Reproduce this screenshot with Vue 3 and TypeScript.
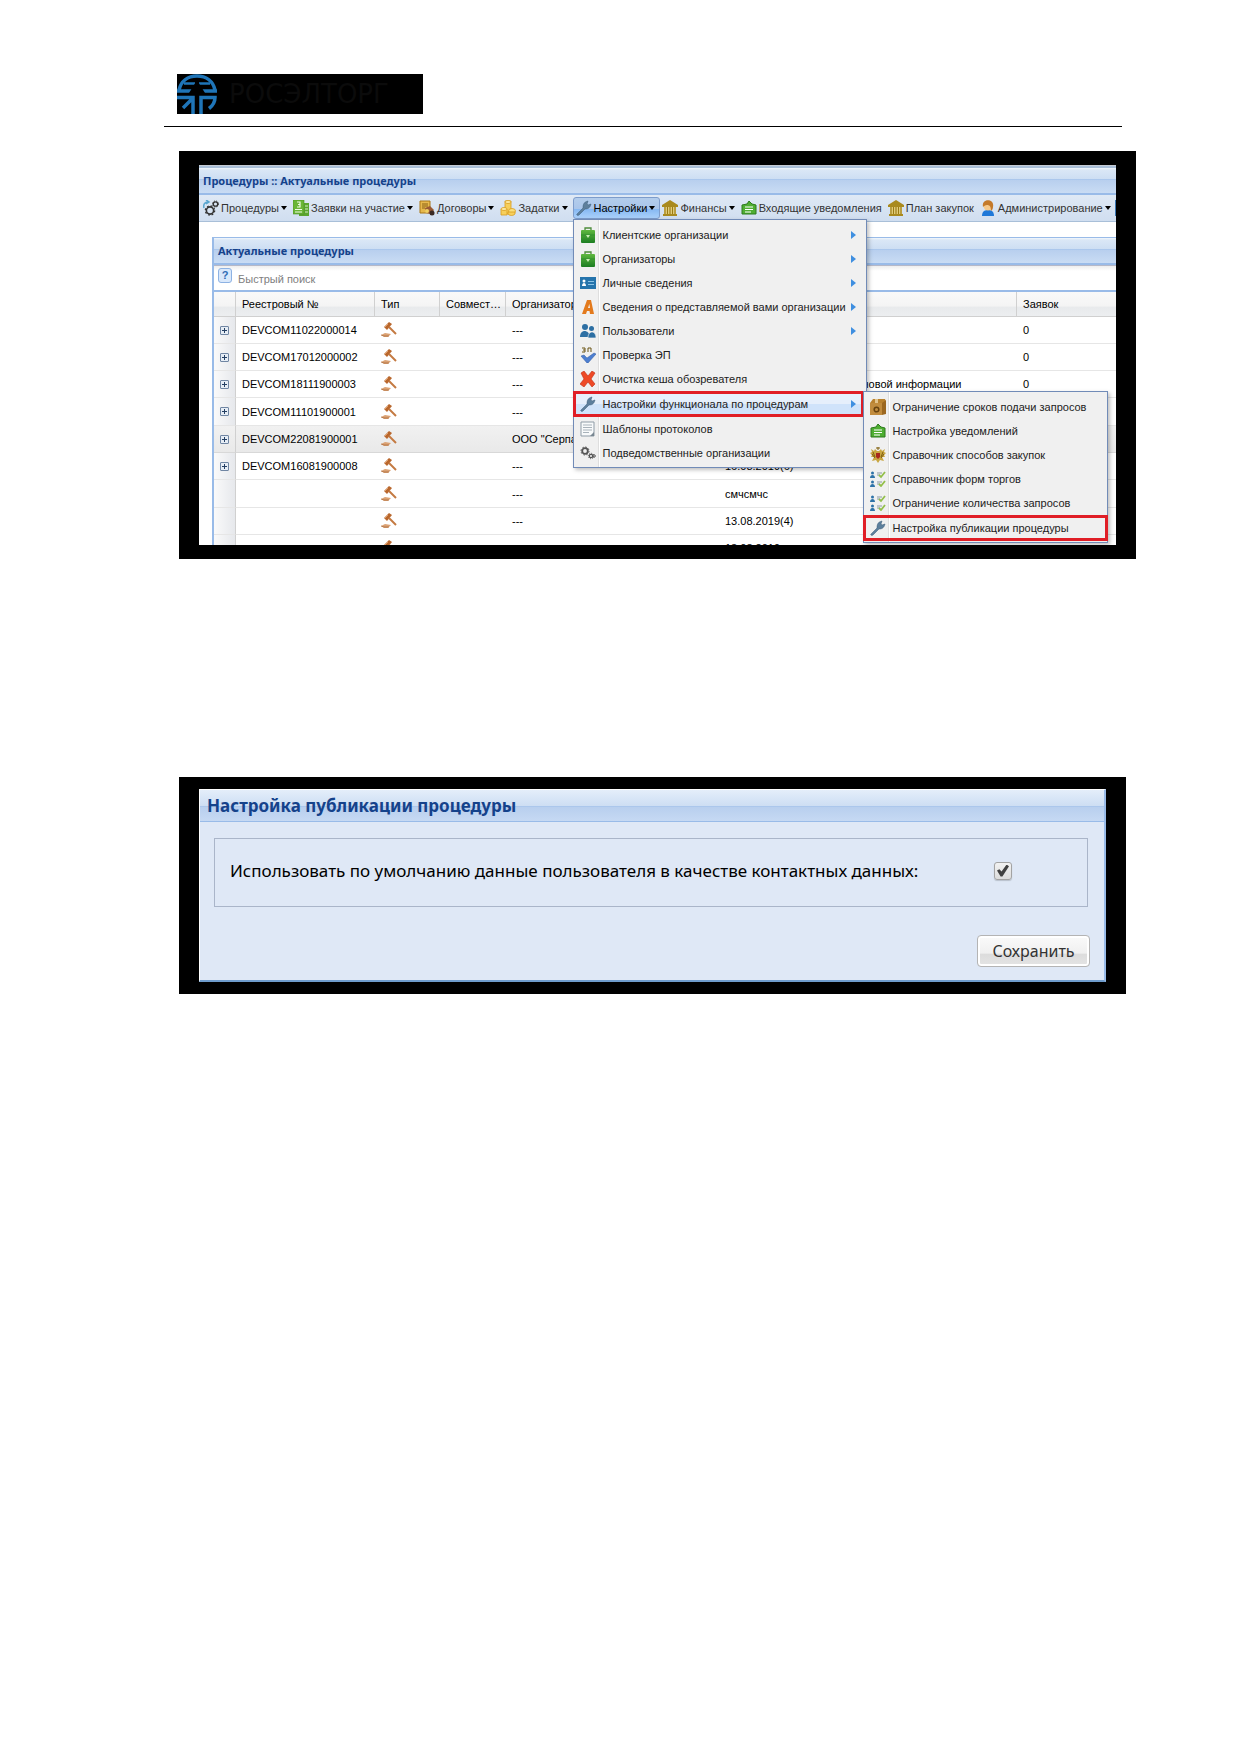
<script setup lang="ts">
import { ref } from 'vue'

interface MenuItem { icon: string; label: string; arrow?: boolean; marked?: boolean }
interface ToolItem { icon: string; label: string; arrow: boolean; active?: boolean }
interface Row { num: string; org: string; name: string; count: string; over?: boolean }

const tools: ToolItem[] = [
  { icon: 'gears', label: 'Процедуры', arrow: true },
  { icon: 'sheets', label: 'Заявки на участие', arrow: true },
  { icon: 'contract', label: 'Договоры', arrow: true },
  { icon: 'coins', label: 'Задатки', arrow: true },
  { icon: 'wrench', label: 'Настройки', arrow: true, active: true },
  { icon: 'bank', label: 'Финансы', arrow: true },
  { icon: 'mail', label: 'Входящие уведомления', arrow: false },
  { icon: 'bank', label: 'План закупок', arrow: false },
  { icon: 'person', label: 'Администрирование', arrow: true },
]

const menu: MenuItem[] = [
  { icon: 'case', label: 'Клиентские организации', arrow: true },
  { icon: 'case', label: 'Организаторы', arrow: true },
  { icon: 'card', label: 'Личные сведения', arrow: true },
  { icon: 'letter', label: 'Сведения о представляемой вами организации', arrow: true },
  { icon: 'users', label: 'Пользователи', arrow: true },
  { icon: 'sign', label: 'Проверка ЭП' },
  { icon: 'cross', label: 'Очистка кеша обозревателя' },
  { icon: 'wrench', label: 'Настройки функционала по процедурам', arrow: true, marked: true },
  { icon: 'doc', label: 'Шаблоны протоколов' },
  { icon: 'cogs', label: 'Подведомственные организации' },
]

const submenu: MenuItem[] = [
  { icon: 'box', label: 'Ограничение сроков подачи запросов' },
  { icon: 'mail', label: 'Настройка уведомлений' },
  { icon: 'eagle', label: 'Справочник способов закупок' },
  { icon: 'checks', label: 'Справочник форм торгов' },
  { icon: 'checks', label: 'Ограничение количества запросов' },
  { icon: 'wrench', label: 'Настройка публикации процедуры', marked: true },
]

const rows: Row[] = [
  { num: 'DEVCOM11022000014', org: '---', name: '', count: '0' },
  { num: 'DEVCOM17012000002', org: '---', name: '', count: '0' },
  { num: 'DEVCOM18111900003', org: '---', name: 'Уведомление о запросе ценовой информации', count: '0' },
  { num: 'DEVCOM11101900001', org: '---', name: '', count: '0' },
  { num: 'DEVCOM22081900001', org: 'ООО "Серпантин"', name: '', count: '0', over: true },
  { num: 'DEVCOM16081900008', org: '---', name: '16.08.2019(6)', count: '' },
  { num: '', org: '---', name: 'смчсмчс', count: '' },
  { num: '', org: '---', name: '13.08.2019(4)', count: '' },
  { num: '', org: '', name: '13.08.2019', count: '' },
]

const useDefaults = ref(true)
const search = ref('')
</script>

<template>
  <svg class="defs" aria-hidden="true">
    <defs>
      <linearGradient id="gGreen" x1="0" y1="0" x2="0" y2="1"><stop offset="0" stop-color="#5fb83f" /><stop offset="1" stop-color="#1c7d22" /></linearGradient>
      <symbol id="gears" viewBox="0 0 16 16">
        <path d="M1 8C0 4 2 2 5 2M3 0l3 2-3 2" fill="none" stroke="#5aa6cf" stroke-width="1.500" />
        <circle cx="7" cy="10.500" r="3.600" fill="none" stroke="#333" stroke-width="1.600" />
        <circle cx="7" cy="10.500" r="4.700" fill="none" stroke="#333" stroke-width="1.200" stroke-dasharray="1.800 1.900" />
        <circle cx="12.500" cy="4" r="2.200" fill="none" stroke="#333" stroke-width="1.300" />
        <circle cx="12.500" cy="4" r="3" fill="none" stroke="#333" stroke-dasharray="1.200 1.200" />
      </symbol>
      <symbol id="sheets" viewBox="0 0 16 16">
        <rect x="6" y="3" width="10" height="13" fill="#5ba52f" />
        <path d="M12 6h3M12 9h3M12 12h3" stroke="#d5efc4" />
        <rect x="0" y="0" width="11" height="14" fill="#6ab536" stroke="#4a8f24" stroke-width=".6" />
        <path d="M4 2h3v2.500H5 7V7H4M2 9.500h7M2 12h7" fill="none" stroke="#eefae4" stroke-width="1.200" />
      </symbol>
      <symbol id="contract" viewBox="0 0 16 16">
        <path d="M1 1h10v12H1z" fill="#e6b84c" stroke="#a97716" />
        <path d="M3 4h6M3 6h6M3 8h3" stroke="#8a6114" />
        <path d="M6 8l5-2 4 4-3 4-5-1z" fill="#9a5a34" /><circle cx="8" cy="11" r="2" fill="#f0d060" /><circle cx="13" cy="13" r="2.500" fill="#3a2a24" />
      </symbol>
      <symbol id="coins" viewBox="0 0 16 16">
        <g fill="#f6cf5c" stroke="#d99c1c" stroke-width=".8"><path d="M5 1h6v13H5z" /><ellipse cx="8" cy="2" rx="3" ry="1.500" fill="#fdeba4" /><path d="M1 9h6v6H1z" /><ellipse cx="4" cy="9" rx="3" ry="1.500" fill="#fdeba4" /><ellipse cx="12" cy="11" rx="3.500" ry="2.500" fill="#fbe07c" /><path d="M8 12h7v2c-2 2-5 2-7 0z" /></g>
      </symbol>
      <symbol id="wrench" viewBox="0 0 16 16">
        <path d="M1 14l6-6C7 4 8 2 12 1l-1 3 1 1 3-1c-1 4-3 5-6 5l-6 6c-1 1-3 0-2-1z" fill="#5d7f9c" stroke="#3b5a78" stroke-width=".5" />
      </symbol>
      <symbol id="bank" viewBox="0 0 16 16">
        <path d="M8 0l8 5v2H0V5zM1 14h14v2H1z" fill="#a98a1e" /><path d="M2 7h12v7H2z" fill="#e8d584" />
        <path d="M3 7v7M5.500 7v7M8 7v7M10.500 7v7M13 7v7" stroke="#9b7b14" stroke-width="1.200" />
      </symbol>
      <symbol id="mail" viewBox="0 0 16 16">
        <path d="M1 5l5-1 2-3 3 3 4 1v9H1z" fill="#4fae32" stroke="#2c7a1c" /><path d="M4 7h8M4 9.500h8M4 12h6" stroke="#fff" stroke-width="1.200" />
      </symbol>
      <symbol id="person" viewBox="0 0 16 16">
        <path d="M2 16c0-4 2-6 6-6s6 2 6 6z" fill="#1f78d8" /><circle cx="8" cy="6" r="4.500" fill="#f6c98a" /><path d="M3 7c-2-9 12-9 10 0 0 2-1 3-2 4 0-4-1-6-4-6-2 0-3 1-4 2z" fill="#c47a2a" />
      </symbol>
      <symbol id="case" viewBox="0 0 16 16">
        <path d="M5 3V1h6v2" fill="none" stroke="#4d8c3a" stroke-width="1.300" /><rect x="1" y="3" width="14" height="13" rx="1" fill="url(#gGreen)" /><path d="M1 8h14" stroke="#2a8a2c" stroke-width=".7" /><path d="M6 8h4l-2 3z" fill="#c9edb4" />
      </symbol>
      <symbol id="card" viewBox="0 0 16 16">
        <rect x="0" y="2" width="16" height="12" fill="#2574ac" /><circle cx="4" cy="6" r="1.500" fill="#fff" /><path d="M2 11c0-4 4-4 4 0z" fill="#fff" /><path d="M8 6h6v1H8zM8 9h6v1H8z" fill="#8cc4e6" />
      </symbol>
      <symbol id="letter" viewBox="0 0 16 16">
        <path d="M2 15L7 1h4l3 14h-4l-.5-3H7l-1 3zM8 9h2L9.300 5z" fill="#e37a1d" fill-rule="evenodd" />
      </symbol>
      <symbol id="users" viewBox="0 0 16 16">
        <g fill="#2d6fa3"><circle cx="5" cy="4" r="3" /><path d="M0 14c0-8 9-8 10 0z" /><circle cx="11.500" cy="5.500" r="2.500" /><path d="M8 15c0-8 8-8 8 0z" stroke="#f0f0f0" stroke-width=".7" /></g>
      </symbol>
      <symbol id="sign" viewBox="0 0 16 16">
        <path d="M2 1h3v4H2M3 3h2M8 5V1h3v4" fill="none" stroke="#6a5414" /><path d="M1 9l3-1 3 3 7-5 2 1-8 9H7z" fill="#4d7fd0" stroke="#2c56a0" stroke-width=".5" />
      </symbol>
      <symbol id="cross" viewBox="0 0 16 16">
        <path d="M1 2l3-2 4 5 4-5 3 2-4 6 4 5-3 3-4-5-4 5-4-3 4-5z" fill="#ee4a26" stroke="#c02c12" stroke-width=".6" />
      </symbol>
      <symbol id="doc" viewBox="0 0 16 16">
        <path d="M1 1h13v14H1z" fill="#f8fafb" stroke="#8e9ba6" /><path d="M3 4h9M3 6.500h9M3 9h9M3 11.500h6" stroke="#a8b2ba" /><path d="M10 15l4-4v4z" fill="#788691" />
      </symbol>
      <symbol id="cogs" viewBox="0 0 16 16">
        <g fill="none" stroke="#555"><circle cx="5" cy="6" r="2.800" stroke-width="1.800" /><circle cx="5" cy="6" r="4" stroke-dasharray="1.600 1.500" /><circle cx="11" cy="11" r="1.700" stroke-width="1.300" /><circle cx="11" cy="11" r="2.700" stroke-dasharray="1 1.100" /><circle cx="14" cy="11" r="1.300" /></g>
      </symbol>
      <symbol id="box" viewBox="0 0 16 16">
        <path d="M0 4l3-4h12l1 3v12H0z" fill="#b9822f" /><path d="M0 4h12l4-3v14l-4 1H0z" fill="#9c6821" /><path d="M0 4h12v12H0z" fill="#c18c3e" /><circle cx="6.500" cy="10.500" r="2.300" fill="none" stroke="#68430f" stroke-width="1.500" /><path d="M5 0h3v4H5z" fill="#e3c48c" />
      </symbol>
      <symbol id="eagle" viewBox="0 0 16 16">
        <path d="M7 4L5 2 4 4 1 2l1 3-2 1 2 2-1 2 3 0-2 4 4-1 2 3 2-3 4 1-2-4 3 0-1-2 2-2-2-1 1-3-3 2-1-2-2 2z" fill="#c9a640" />
        <path d="M7 0h2v2H7zM3 5l2 5M13 5l-2 5M2 7l3 4M14 7l-3 4" fill="none" stroke="#80600f" /><path d="M6 6h4v4l-2 2-2-2z" fill="#a8281c" />
      </symbol>
      <symbol id="checks" viewBox="0 0 16 16">
        <g fill="#2f73a8"><circle cx="2.500" cy="2" r="1.500" /><path d="M0 7c0-4 5-4 5 0zM0 16c0-4 5-4 5 0z" /><circle cx="2.500" cy="11" r="1.500" /></g><path d="M7 2h5M7 4h3M7 11h5M7 13h3" stroke="#8d9ba5" /><path d="M9 4l2 2 4-5M9 13l2 2 4-5" fill="none" stroke="#93bf4a" stroke-width="1.800" />
      </symbol>
      <symbol id="gavel" viewBox="0 0 16 16">
        <path d="M3 5l5-5 3 2-5 6z" fill="#b9672d" /><path d="M4 5l3-3" stroke="#e0a06c" /><path d="M8 5l7 7" stroke="#c47a42" stroke-width="2" /><path d="M0 13l4-2 6 1-3 3H3z" fill="#dba274" /><path d="M0 13l3 1h5" stroke="#a8683a" fill="none" stroke-width=".7" />
      </symbol>
    </defs>
  </svg>

  <main class="page">
    <header class="top">
      <div class="logo">
        <svg class="emblem" viewBox="0 0 40 40" aria-hidden="true">
          <g fill="none" stroke="#1f75b8" stroke-width="3.500">
            <path d="M2 16C4 7 11 2 20 2s16 5 18 14" />
            <path d="M0 17h15M25 17h15" />
            <path d="M7 9.500h11M22 9.500h11" stroke-width="2.500" />
            <path d="M0 23.500h16V40M16 24L6 34" />
            <path d="M24 40V23.500h14c0 5-2 8-6 11" />
          </g>
          <path d="M12 19l8-13 8 13z" fill="#000" />
        </svg>
        <span>РОСЭЛТОРГ</span>
      </div>
    </header>

    <section class="frame first">
      <div class="app">
        <h1 class="bar title">Процедуры :: Актуальные процедуры</h1>
        <nav class="toolbar">
          <div v-for="t in tools" :key="t.label" class="tool" :class="{ active: t.active }">
            <button type="button" class="tool-btn">
              <svg class="ico"><use :href="'#' + t.icon" /></svg>
              <span>{{ t.label }}</span>
              <i v-if="t.arrow" class="down" />
            </button>
            <ul v-if="t.active" class="menu main-menu">
              <li v-for="m in menu" :key="m.label" :class="{ marked: m.marked }">
                <button type="button" class="item">
                  <svg class="ico"><use :href="'#' + m.icon" /></svg>
                  <span>{{ m.label }}</span>
                  <i v-if="m.arrow" class="right" />
                </button>
                <ul v-if="m.marked" class="menu sub-menu">
                  <li v-for="s in submenu" :key="s.label" :class="{ marked: s.marked }">
                    <button type="button" class="item">
                      <svg class="ico"><use :href="'#' + s.icon" /></svg>
                      <span>{{ s.label }}</span>
                    </button>
                  </li>
                </ul>
              </li>
            </ul>
          </div>
          <i class="cut" />
        </nav>
        <div class="grid">
          <h2 class="bar">Актуальные процедуры</h2>
          <div class="search">
            <button type="button" class="help">?</button>
            <input v-model="search" type="text" placeholder="Быстрый поиск" aria-label="Быстрый поиск" />
          </div>
          <table>
            <colgroup>
              <col class="c-exp" /><col class="c-num" /><col class="c-type" /><col class="c-joint" /><col class="c-org" /><col /><col class="c-count" />
            </colgroup>
            <thead>
              <tr><th></th><th>Реестровый №</th><th>Тип</th><th>Совместная</th><th>Организатор</th><th></th><th>Заявок</th></tr>
            </thead>
            <tbody>
              <tr v-for="(r, i) in rows" :key="i" :class="{ over: r.over }">
                <td class="exp"><button v-if="r.num" type="button" class="plus" aria-label="Развернуть" /></td>
                <td>{{ r.num }}</td>
                <td><svg class="ico"><use href="#gavel" /></svg></td>
                <td></td>
                <td>{{ r.org }}</td>
                <td>{{ r.name }}</td>
                <td>{{ r.count }}</td>
              </tr>
            </tbody>
          </table>
        </div>
      </div>
    </section>

    <section class="frame second">
      <form class="dialog" @submit.prevent>
        <h2>Настройка публикации процедуры</h2>
        <div class="field">
          <label for="defaults">Использовать по умолчанию данные пользователя в качестве контактных данных:</label>
          <input id="defaults" v-model="useDefaults" type="checkbox" />
        </div>
        <div class="actions"><button type="submit">Сохранить</button></div>
      </form>
    </section>
  </main>
</template>

<style>
body { background: #fff; }
</style>

<style scoped>
* { box-sizing: border-box; }
.defs { position: absolute; width: 0; height: 0; }
.page { padding: 74px 103px 0 164px; font: 11px/14px "Liberation Sans", Arial, sans-serif; color: #000; }
h1, h2, ul { margin: 0; padding: 0; }
ul { list-style: none; }
button { font: inherit; color: inherit; border: 0; background: none; padding: 0; margin: 0; }
.ico { width: 16px; height: 16px; flex: none; display: block; }

.top { margin-right: 14px; padding: 0 0 12px 13px; border-bottom: 1px solid #000; }
.logo { display: flex; align-items: center; gap: 12px; width: 246px; height: 40px; background: #000; overflow: hidden; color: #0b0b0b; font: 26px/40px "DejaVu Sans", sans-serif; }
.emblem { width: 40px; height: 40px; flex: none; }

.frame { background: #000; margin-left: 15px; }
.first { margin-top: 24px; padding: 14px 20px; }
.app { background: #fff; border-top: 1px solid #c5cbd3; height: 380px; overflow: hidden; }
.bar { height: 27px; padding: 0 4px; font: bold 11px/25px "Noto Sans", sans-serif; color: #15428b; border-bottom: 2px solid #99bbe8; background: linear-gradient(#f2f7fc, #dae7f6 2px, #cddef3 11px, #abc7ec 11px, #abc7ec 12px, #b8cfee 12px, #c9dcf4); }
.title { height: 29px; border-top: 2px solid #a9bfd8; }
.toolbar { display: flex; align-items: center; height: 27px; padding-left: 4px; border-bottom: 1px solid #a9bfd8; background: linear-gradient(#dfe9f5, #d0def0); color: #333; position: relative; }
.tool { position: relative; margin-right: 6px; }
.tool-btn { display: flex; align-items: center; gap: 2px; height: 22px; white-space: nowrap; }
.active { margin: 0 2px 0 -1px; color: #000; }
.active .tool-btn { border: 1px solid #7d9ccb; border-radius: 3px; padding: 0 4px 0 2px; background: linear-gradient(#b3cdec, #a9c5ea 55%, #86b8f2 56%, #a9d0fb); }
.down { border: 3px solid transparent; border-top: 4px solid #000; border-bottom: 0; }
.cut { position: absolute; right: 0; top: 5px; width: 1px; height: 16px; background: #3b78b5; }

.menu { position: absolute; border: 1px solid #718bb7; background: linear-gradient(90deg, #f0f0f0 24px, #dedede 24px, #dedede 25px, #fff 25px, #fff 26px, #f0f0f0 26px); box-shadow: 2px 2px 4px rgba(0, 0, 0, .25); padding: 3px 0 2px; color: #222; }
.main-menu { left: 0; top: 22px; width: 294px; z-index: 5; }
.sub-menu { left: 287px; top: -3px; width: 245px; padding: 3px 0 1px; z-index: 6; }
.item { display: flex; align-items: center; width: 100%; height: 24px; padding: 0 10px 0 6px; gap: 7px; white-space: nowrap; text-align: left; }
.item span { flex: 1; min-width: 0; }
.right { border: 4px solid transparent; border-left: 5px solid #3f8fe0; border-right: 0; }
.main-menu .right { margin-left: -7px; }
.marked { position: relative; border: 3px solid #e01e26; margin: 0 2px 0 -1px; }
.marked > .item { height: 20px; padding: 0 5px 0 4px; }
.main-menu > .marked > .item { background: linear-gradient(#e6effb 50%, #d0e3fa 50%); }
.sub-menu .marked { margin: 0 -1px; }

.grid { margin: 15px 0 0 13px; border-left: 2px solid #99bbe8; border-top: 1px solid #99bbe8; }
.search { display: flex; align-items: flex-start; height: 27px; padding: 2px 4px 0; border-top: 1px solid #b5b8c8; border-bottom: 2px solid #99bbe8; background: linear-gradient(#eee, #fff 5px); }
.help { width: 14px; height: 15px; border: 1px solid #8db2e3; border-radius: 3px; background: #d9e8fb; color: #2f6cb5; font-weight: bold; line-height: 13px; }
.search input { flex: 1; min-width: 0; margin-left: 6px; padding: 0; height: 22px; border: 0; background: none; font: inherit; outline: 0; }
.search input::placeholder { color: #808080; }
table { width: 100%; border-collapse: separate; border-spacing: 0; table-layout: fixed; }
.c-exp { width: 22px; } .c-num { width: 139px; } .c-type { width: 65px; } .c-joint { width: 66px; } .c-org { width: 213px; } .c-count { width: 99px; }
th, td { padding: 0 0 0 6px; text-align: left; font-weight: normal; overflow: hidden; white-space: nowrap; text-overflow: ellipsis; }
th { height: 25px; background: linear-gradient(#f9f9f9, #f4f4f4 60%, #e8eaec 61%, #eceef0); border-right: 1px solid #d0d0d0; border-bottom: 1px solid #d0d0d0; }
th:last-child { border-right: 0; }
td { height: 27px; border-bottom: 1px solid #e6e6e6; }
tr:nth-child(3n+4) td { height: 28px; }
.exp { padding: 0 0 0 6px; background: linear-gradient(90deg, #fafafa, #e6e8ec); border-right: 1px solid #d0d0d0; }
.over td { background: linear-gradient(#f1f1f1, #e9e9e9); border-bottom-color: #d8d8d8; }
.plus { display: block; width: 9px; height: 9px; border: 1px solid #7086a3; border-radius: 1px; background: linear-gradient(#243f63, #243f63) center/5px 1px no-repeat, linear-gradient(#243f63, #243f63) center/1px 5px no-repeat, #e6edf5; }

.second { margin: 218px 10px 0 15px; padding: 12px 20px; }
.dialog { background: #dfe8f6; border: 1px solid #fff; border-right: 2px solid #99bbe8; border-bottom: 2px solid #6f9ccc; padding-bottom: 13px; }
.dialog h2 { height: 32px; padding-left: 7px; font: bold 17px/32px "Noto Sans", sans-serif; color: #15428b; border-bottom: 1px solid #99bbe8; background: linear-gradient(#e4eefa, #cddef3 16px, #abc7ec 16px, #abc7ec 17px, #b8cfee 17px, #c6d9f3); }
.field { display: flex; align-items: center; justify-content: space-between; height: 69px; margin: 16px 16px 28px 14px; padding: 0 75px 4px 15px; border: 1px solid #aab5c9; font: 17px/24px "Noto Sans", sans-serif; white-space: nowrap; }
.field input { appearance: none; width: 18px; height: 18px; margin: 0; border: 1px solid #a3a3a3; border-radius: 3px; background: linear-gradient(#f2f2f2, #dcdcdc); box-shadow: 0 1px 1px #b8c0cc; }
.field input:checked::after { content: ""; display: block; width: 12px; height: 12px; margin: 2px; background: #404040; clip-path: polygon(0 50%, 20% 40%, 38% 58%, 80% 0, 100% 14%, 45% 100%, 30% 100%); }
.actions { display: flex; justify-content: flex-end; padding-right: 14px; }
.actions button { width: 113px; height: 32px; border: 1px solid #b4b4b4; border-radius: 4px; color: #333; font: 16px/28px "Noto Sans", sans-serif; background: linear-gradient(#fafafa, #f0f0f0 58%, #dcdcdc 59%, #e4e4e4); box-shadow: inset 0 0 0 2px #fff; }
</style>
